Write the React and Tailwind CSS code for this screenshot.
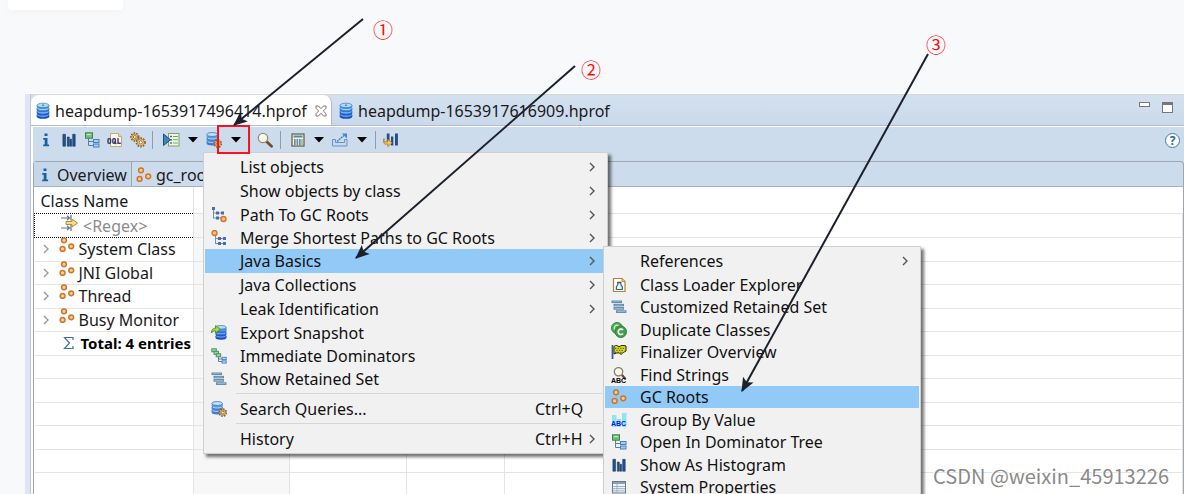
import React from "react";

const svg = { width: 16, height: 16, viewBox: "0 0 16 16", "aria-hidden": true };

function DbIcon() {
  return (
    <svg {...svg} height={18} viewBox="0 0 16 18">
      {[13, 9.8, 6.6, 3.4].map((y, i) => (
        <g key={y}>
          <path
            d={`M1.700 ${y}v1.400c0 1.400 2.800 2.300 6.300 2.300s6.300-.9 6.300-2.300V${y}z`}
            fill={["#1546c0", "#1c5ad0", "#2f78d8", "#4a94dc"][i]}
          />
          <ellipse cx="8" cy={y} rx="6" ry="2.200" fill={["#6aa4f4", "#86b8f6", "#a2cff6", "#b2deee"][i]} stroke="#2463bd" strokeWidth=".6" />
        </g>
      ))}
      <ellipse cx="8" cy="3.200" rx="1.300" ry=".7" fill="#3c7fc4" />
    </svg>
  );
}

function Gear({ x, y, r }) {
  return (
    <g>
      <circle cx={x} cy={y} r={r} fill="#ecd09a" stroke="#8e5f26" strokeWidth="1.8" strokeDasharray="1.6 1.1" />
      <circle cx={x} cy={y} r={r - 0.9} fill="#f3dba6" stroke="#a87838" strokeWidth=".8" />
      <circle cx={x} cy={y} r={r / 2.6} fill="#fff" stroke="#8c5c28" strokeWidth=".9" />
    </g>
  );
}

function DbGearIcon() {
  return (
    <svg {...svg}>
      {[9.600, 6, 2.500].map((y, i) => (
        <g key={y}>
          <path
            d={`M.6 ${y}v2c0 1.200 2.400 2 5.600 2s5.600-.8 5.600-2v-2z`}
            fill={["#3c78cc", "#4787d6", "#5b9ae0"][i]}
          />
          <ellipse cx="6.200" cy={y} rx="5.300" ry="2" fill={["#a4cbf4", "#add3f5", "#bfe0f6"][i]} stroke="#2c69b8" strokeWidth=".7" />
        </g>
      ))}
      <Gear x={11.8} y={11.6} r={3.500} />
    </svg>
  );
}

function ExportIcon() {
  return (
    <svg {...svg}>
      {[11, 7.800, 4.600, 2.300].map((y, i) => (
        <g key={y}>
          <path d={`M4.500 ${y}v1.800c0 1.200 2.400 2 5.500 2s5.500-.8 5.500-2v-1.800z`} fill={["#1546c0", "#1c5ad0", "#2f78d8", "#4a94dc"][i]} />
          <ellipse cx="10" cy={y} rx="5.200" ry="1.900" fill={["#6aa4f4", "#86b8f6", "#a2cff6", "#b2deee"][i]} stroke="#2463bd" strokeWidth=".6" />
        </g>
      ))}
      <path d="M.5 8C.5 4.300 2.500 3.200 4.600 3.100V.6l4.700 3.700-4.700 3.700V5.900C3 5.900 1.600 6.300.5 8z" fill="#a8d452" stroke="#4f8a1c" strokeWidth=".9" />
    </svg>
  );
}

function InfoIcon() {
  return (
    <svg {...svg}>
      <path d="M6.500 1.500h3v2.600h-3zM5.200 6h4.300v6.600h1.600v1.700H5.200v-1.700h1.500V7.700H5.200z" fill="#1464a5" />
    </svg>
  );
}

function BarsIcon() {
  return (
    <svg {...svg}>
      <g fill="#20518c" stroke="#173b68" strokeWidth=".6">
        <path d="M1.900 2.300h2.600v11.900H1.900zM6.300 5h2v9.200h-2zM9 7.200h1.600v7H9zM11.700 2.300h2.500v11.900h-2.500z" />
      </g>
    </svg>
  );
}

function TreeIcon() {
  return (
    <svg {...svg}>
      <path d="M4.500 6v7.500H10M4.500 9.500H10" fill="none" stroke="#5a7ea8" />
      <rect x="1.500" y=".8" width="7" height="5.400" fill="#78bf7c" stroke="#3a8450" />
      <path d="M3 2.500h4" stroke="#c8ecc4" />
      <rect x="9.500" y="7.500" width="5.500" height="3" fill="#a9cdf2" stroke="#4a80c0" />
      <rect x="9.500" y="12" width="5.500" height="3" fill="#a9cdf2" stroke="#4a80c0" />
    </svg>
  );
}

function OqlIcon() {
  return (
    <svg {...svg}>
      <path d="M3.500 1.500h8l3 3v10h-11z" fill="#fbf7e8" stroke="#c3ab72" />
      <path d="M11.500 1.500v3h3" fill="#ead9a4" stroke="#c3ab72" />
      <g fill="none" stroke="#40386e" strokeWidth="1.400">
        <rect x="1" y="6.700" width="2.600" height="4.600" rx="1" />
        <rect x="5.800" y="6.700" width="2.600" height="4.600" rx="1" />
        <path d="M7.300 9.500l2 2.500M11 6v5.300h2.800" />
      </g>
    </svg>
  );
}

function GearsIcon() {
  return (
    <svg {...svg}>
      <Gear x={4.8} y={5} r={3.8} />
      <Gear x={10.8} y={10.400} r={4.200} />
    </svg>
  );
}

function RunIcon() {
  return (
    <svg width="18" height="16" viewBox="0 0 18 16" aria-hidden>
      <rect x="6.500" y="1.500" width="10.500" height="12.500" fill="#eef6e4" stroke="#8c9c62" />
      <path d="M8 4.500h2M8 7.700h2M8 11h2" stroke="#3c8c50" strokeWidth="1.400" />
      <path d="M11 4.500h5M11 7.700h5M11 11h5" stroke="#6ba878" />
      <path d="M1.500 2v11.500l7-5.700z" fill="#3f84b8" stroke="#1d4f80" />
    </svg>
  );
}

function SearchIcon() {
  return (
    <svg {...svg}>
      <path d="M9.500 9.500l5 4.700" stroke="#7a4a28" strokeWidth="2.800" strokeLinecap="round" />
      <circle cx="6" cy="6" r="4.700" fill="#f7f5e4" stroke="#90907c" strokeWidth="1.300" />
      <path d="M3.600 5.500a2.700 2.700 0 0 1 2.600-2.200" fill="none" stroke="#fff" strokeWidth="1.400" />
    </svg>
  );
}

function CalcIcon() {
  return (
    <svg {...svg}>
      <rect x="2" y="2" width="12" height="12" fill="#f2f0dc" stroke="#6c6548" strokeWidth="1.300" />
      <path d="M3.500 4.500h9" stroke="#4f88b0" strokeWidth="2" />
      <path d="M4 8h8.500M4 10h8.500M4 12h8.500" stroke="#3b7290" strokeWidth="1.400" strokeDasharray="1.700 .8" />
    </svg>
  );
}

function ShareIcon() {
  return (
    <svg width="18" height="16" viewBox="0 0 18 16" aria-hidden>
      <path d="M1.500 7.500h3v3h9v-3h2.500v6.500H1.500z" fill="#c5daf0" stroke="#6a93c4" />
      <path d="M6 9.500l7-6" stroke="#3e7bb8" strokeWidth="1.300" strokeDasharray="2 .6" />
      <path d="M11 1.500h5v5z" fill="#4a85c0" />
    </svg>
  );
}

function CompareIcon() {
  return (
    <svg {...svg}>
      <path d="M3.800 1.500h2.700v8H3.800zM8 4.500h2.300v9H8zM12 1.500h2.900v12H12z" fill="#234f88" />
      <path d="M1 6.500v3.300h3.800V7.200l4.400 3.600-4.400 3.700v-2.400H2.500C1.300 12.100.6 11 .6 9.800z" fill="#f3c65a" stroke="#a87620" strokeWidth=".8" />
    </svg>
  );
}

function RootsIcon() {
  return (
    <svg {...svg}>
      <g fill="#fbcf8c" stroke="#d0742a" strokeWidth="1.500">
        <circle cx="5" cy="3.300" r="2.400" />
        <circle cx="3.600" cy="11.900" r="2.400" />
        <circle cx="12.200" cy="9.300" r="2.400" />
      </g>
    </svg>
  );
}

function PathIcon({ up }) {
  return (
    <svg {...svg}>
      <path d={up ? "M4.500 5v9M4.500 8.500H14M4.500 13.500H14" : "M2.500 1.500v10M2.500 6H13M2.500 11H10"} fill="none" stroke="#6f8fc0" />
      <g fill="#4a6ca8">
        {up ? (
          <path d="M7 7h3v3H7zM12 7h3v3h-3zM7 12h3v3H7zM12 12h3v3h-3z" />
        ) : (
          <path d="M1 0h3v3H1zM5 4.500h3v3H5zM10 4.500h3v3h-3zM5 9.500h3v3H5z" />
        )}
      </g>
      <circle cx={up ? 3.5 : 12.5} cy={up ? 3 : 12} r="2.500" fill="#f8c078" stroke="#cf7628" strokeWidth="1.400" />
    </svg>
  );
}

function DominatorsIcon() {
  return (
    <svg {...svg}>
      <path d="M7.500 9v4.500H11M7.500 11H11" fill="none" stroke="#5a7ea8" />
      <g fill="#9ed0a0" stroke="#3f8f5c" strokeWidth=".9">
        <rect x=".8" y=".8" width="4.500" height="3" />
        <rect x="3" y="3.300" width="4.500" height="3" />
        <rect x="5.200" y="5.800" width="4.500" height="3" />
      </g>
      <g fill="#b4d4f4" stroke="#4a80c0" strokeWidth=".9">
        <rect x="11" y="9.300" width="4.200" height="2.300" />
        <rect x="11" y="12.800" width="4.200" height="2.300" />
      </g>
    </svg>
  );
}

function SetIcon() {
  return (
    <svg {...svg}>
      <g fill="#a8cdea" stroke="#56809f" strokeWidth=".9">
        <rect x="1" y="2" width="9.500" height="1.600" />
        <rect x="3" y="5.300" width="9.500" height="1.600" />
        <rect x="3" y="8.600" width="9.500" height="1.600" />
        <rect x="5.500" y="11.800" width="9.500" height="1.600" />
      </g>
    </svg>
  );
}

function LoaderIcon() {
  return (
    <svg {...svg}>
      <path d="M2.500 1.500H11l3 3v10H2.500z" fill="#fffdf2" stroke="#a8863c" strokeWidth="1.200" />
      <path d="M11 1.500v3h3" fill="#e8cf8c" stroke="#b08a3c" />
      <path d="M6.800 5.500h3v2l1.500 2.300v2.700H5.400V9.800l1.400-2.300z" fill="#e8f3fc" stroke="#2c68a8" strokeWidth="1.200" />
      <path d="M6.500 5.500h3.600" stroke="#7a3a20" strokeWidth="1.500" />
    </svg>
  );
}

function DuplicateIcon() {
  return (
    <svg {...svg}>
      <circle cx="6" cy="6" r="5.500" fill="#58b05c" stroke="#2d8238" />
      <path d="M7.500 3.500a3 3 0 0 0-4 4" fill="none" stroke="#d4efd2" strokeWidth="1.200" />
      <circle cx="9.800" cy="9.800" r="5.700" fill="#3fa048" stroke="#2d8238" />
      <path d="M12 8.100a2.700 2.700 0 1 0 0 3.500" fill="none" stroke="#fff" strokeWidth="1.600" />
    </svg>
  );
}

function FlagIcon() {
  return (
    <svg {...svg}>
      <path d="M1.500 1v14" stroke="#3a5c90" strokeWidth="1.800" />
      <path d="M3 2.500c2-1.800 3.500-1 5 .3 1.800-1.300 4-1.800 7-.8v5c-2 1.200-3.400 1.800-5 3.500-1.500-1.800-3-2.300-7-.5z" fill="#d9dc1c" stroke="#22240c" />
      <path d="M4 4.300h10M4 8.300h8" stroke="#4c4c10" strokeDasharray="1.300 1.300" />
      <path d="M5.300 6.300h8" stroke="#4c4c10" strokeDasharray="1.300 1.300" />
    </svg>
  );
}

function StringsIcon() {
  return (
    <svg {...svg}>
      <circle cx="7.500" cy="4.800" r="4.200" fill="#fbfae8" stroke="#80806c" strokeWidth="1.300" />
      <path d="M11 8l3.500 4" stroke="#6b3a2c" strokeWidth="2" />
      <text x="0" y="15.500" fontSize="7" fontWeight="700" fontFamily="Liberation Sans, sans-serif" fill="#000">ABC</text>
    </svg>
  );
}

function GroupIcon() {
  return (
    <svg {...svg}>
      <path d="M1 3h4.500v12H1zM6 7h4v8H6zM11 1h4.500v14H11z" fill="#90e6ee" />
      <text x="0" y="13.500" fontSize="7" fontWeight="700" fontFamily="Liberation Sans, sans-serif" fill="#0a18e0">ABC</text>
    </svg>
  );
}

function PropertiesIcon() {
  return (
    <svg {...svg}>
      <rect x="1.500" y="2.500" width="13" height="11.500" fill="#eef3f8" stroke="#6c7c90" />
      <path d="M2 4h12" stroke="#8ba0b8" strokeWidth="2" />
      <path d="M2 7.500h12M2 9.700h12M2 11.900h12M6 5v9" stroke="#9aaabd" strokeWidth=".9" />
    </svg>
  );
}

function RegexIcon() {
  return (
    <svg width="18" height="16" viewBox="0 0 18 16" aria-hidden>
      <path d="M0 3h8M0 13h8M6 .8l2.500 2.200L6 5M6 10.800L8.500 13 6 15M10 0v5.500M10 10v6" fill="none" stroke="#5f7488" strokeWidth="1.200" />
      <path d="M5 6.500h6V4l5.500 4-5.500 4V9.500H5z" fill="#f7dc90" stroke="#bb8c2c" />
    </svg>
  );
}

function Caret() {
  return (
    <svg width="10" height="6" viewBox="0 0 10 6" aria-hidden>
      <path d="M0 0h10L5 5.500z" fill="#000" />
    </svg>
  );
}

function Chevron({ color = "#555" }) {
  return (
    <svg width="6" height="10" viewBox="0 0 6 10" aria-hidden>
      <path d="M1 1l4 4-4 4" fill="none" stroke={color} strokeWidth="1.400" />
    </svg>
  );
}

function ToolButton({ label, className = "w-[23px]", children }) {
  return (
    <button type="button" aria-label={label} className={`flex h-6 shrink-0 items-center justify-center ${className}`}>
      {children}
    </button>
  );
}

const Divider = () => <span className="mx-[3px] h-[18px] w-px shrink-0 bg-[#8f9bab]" />;

function MenuItem({ item, sub }) {
  const { label, icon, shortcut, arrow, active } = item;
  let height = icon ? "h-[23px]" : "h-6";
  if (sub && icon) height = "odd:h-[22px] even:h-[23px]";
  return (
    <li className={`${height} ${active ? "bg-[#91c9f7]" : ""}`}>
      <button type="button" role="menuitem" className="flex h-full w-full items-center text-left whitespace-nowrap">
        <span className="flex w-7 shrink-0 justify-center">{icon}</span>
        <span className="flex-1 pl-[7px]">{label}</span>
        {shortcut && <span className="w-[50px]">{shortcut}</span>}
        <span className="mr-[7px] flex w-[14px] justify-center">{arrow && <Chevron />}</span>
      </button>
    </li>
  );
}

const mainMenu = [
  { label: "List objects", arrow: true },
  { label: "Show objects by class", arrow: true },
  { label: "Path To GC Roots", icon: <PathIcon />, arrow: true },
  { label: "Merge Shortest Paths to GC Roots", icon: <PathIcon up />, arrow: true },
  { label: "Java Basics", arrow: true, active: true },
  { label: "Java Collections", arrow: true },
  { label: "Leak Identification", arrow: true },
  { label: "Export Snapshot", icon: <ExportIcon /> },
  { label: "Immediate Dominators", icon: <DominatorsIcon /> },
  { label: "Show Retained Set", icon: <SetIcon /> },
  null,
  { label: "Search Queries...", icon: <DbGearIcon />, shortcut: "Ctrl+Q" },
  null,
  { label: "History", shortcut: "Ctrl+H", arrow: true },
];

const basicsMenu = [
  { label: "References", arrow: true },
  { label: "Class Loader Explorer", icon: <LoaderIcon /> },
  { label: "Customized Retained Set", icon: <SetIcon /> },
  { label: "Duplicate Classes", icon: <DuplicateIcon /> },
  { label: "Finalizer Overview", icon: <FlagIcon /> },
  { label: "Find Strings", icon: <StringsIcon /> },
  { label: "GC Roots", icon: <RootsIcon />, active: true },
  { label: "Group By Value", icon: <GroupIcon /> },
  { label: "Open In Dominator Tree", icon: <TreeIcon /> },
  { label: "Show As Histogram", icon: <BarsIcon /> },
  { label: "System Properties", icon: <PropertiesIcon /> },
];

function Menu({ items, sub, className }) {
  return (
    <ul
      role="menu"
      className={`absolute border border-[#cfcfcf] bg-[#f1f1f1] px-px text-[#111] shadow-[3px_3px_3px_rgba(0,0,0,0.55)] ${className}`}
    >
      {items.map((item, i) =>
        item ? (
          <MenuItem key={item.label} item={item} sub={sub} />
        ) : (
          <li key={i} role="separator" className="mr-1 ml-[31px] flex h-[7px] items-center">
            <span className="h-px w-full bg-[#d7d7d7]" />
          </li>
        )
      )}
    </ul>
  );
}

const rows = ["System Class", "JNI Global", "Thread", "Busy Monitor"];

function EmptyCells() {
  return (
    <>
      <td className="border border-[#e4e4e4] bg-[#f7f7f7]" />
      <td className="border border-[#e4e4e4]" />
      <td className="border border-[#e4e4e4]" />
      <td className="border border-[#e4e4e4]" />
    </>
  );
}

function RootsTable() {
  return (
    <table className="w-full table-fixed border-collapse bg-white">
      <colgroup>
        <col className="w-[159px]" />
        <col className="w-[96px]" />
        <col className="w-[117px]" />
        <col className="w-[98px]" />
        <col />
      </colgroup>
      <thead>
        <tr className="h-[26px]">
          <th className="border-r border-[#e4e4e4] pt-[2px] pl-[6px] text-left font-normal">Class Name</th>
          <th colSpan={4} />
        </tr>
      </thead>
      <tbody>
        <tr className="h-6">
          <td className="border border-dotted border-black p-0">
            <div className="flex h-[22px] items-center">
              <span className="mr-1 ml-[26px] shrink-0 pb-1">
                <RegexIcon />
              </span>
              <input aria-label="Class name filter" placeholder="<Regex>" className="w-24 min-w-0 pt-[2px] leading-5 outline-none placeholder:text-[#8c8c8c]" />
            </div>
          </td>
          <EmptyCells />
        </tr>
        {rows.map((name) => (
          <tr key={name} className="odd:h-[23px] even:h-6">
            <td className="border-b border-[#e4e4e4] p-0">
              <div className="flex h-[22px] items-center">
                <button type="button" aria-label={`Expand ${name}`} className="ml-[7px] flex w-2 shrink-0 justify-center">
                  <Chevron color="#999" />
                </button>
                <span className="mr-1 ml-[9px] shrink-0 pb-2">
                  <RootsIcon />
                </span>
                <span className="whitespace-nowrap">{name}</span>
              </div>
            </td>
            <EmptyCells />
          </tr>
        ))}
        <tr className="odd:h-[23px] even:h-6">
          <td className="border-b border-[#e4e4e4] p-0">
            <div className="flex h-[22px] items-center">
              <svg width="12" height="14" viewBox="0 0 12 14" aria-hidden className="mr-[6px] ml-7 shrink-0">
                <path d="M10 4V1.500H1.500L6.500 7l-5 5.500H10V10" fill="none" stroke="#3f6f9f" strokeWidth="1.200" />
              </svg>
              <b className="text-[15px] whitespace-nowrap text-black">Total: 4 entries</b>
            </div>
          </td>
          <EmptyCells />
        </tr>
        {[1, 2, 3, 4, 5, 6, 7].map((n) => (
          <tr key={n} className="odd:h-[23px] even:h-6">
            <td className="border-b border-[#e4e4e4]" />
            <EmptyCells />
          </tr>
        ))}
      </tbody>
    </table>
  );
}

function Arrow({ x1, y1, x2, y2 }) {
  const angle = (Math.atan2(y2 - y1, x2 - x1) * 180) / Math.PI;
  return (
    <g stroke="#1c202b" fill="#1c202b">
      <line x1={x1} y1={y1} x2={x2} y2={y2} strokeWidth="2" />
      <path d="M1 0L-13 -6L-10 0L-13 6z" stroke="none" transform={`translate(${x2} ${y2}) rotate(${angle})`} />
    </g>
  );
}

function Annotations() {
  return (
    <>
      <div className="pointer-events-none absolute top-[125px] left-[217px] h-[29px] w-[33px] border-2 border-[#f5141c]" />
      <svg width="1184" height="494" className="pointer-events-none absolute top-0 left-0" aria-hidden>
        <Arrow x1={363} y1={19} x2={234} y2={125} />
        <Arrow x1={575} y1={66} x2={356} y2={258} />
        <Arrow x1={928} y1={54} x2={742} y2={391} />
      </svg>
      <div className="font-['Noto_Sans_CJK_SC',sans-serif] text-xl leading-5 text-[#fb0d0d]">
        <span className="absolute top-5 left-[373px]">①</span>
        <span className="absolute top-[60px] left-[581px]">②</span>
        <span className="absolute top-[35px] left-[926px]">③</span>
      </div>
    </>
  );
}

export default function App() {
  return (
    <div className="relative h-screen overflow-hidden bg-[#f8f9fb] font-['Noto_Sans',sans-serif] text-base leading-5 text-[#1a1a1a]">
      <div className="ml-2 h-[10px] w-[115px] rounded-b bg-white shadow-[0_2px_8px_rgba(0,0,0,0.03)]" />

      <main className="mt-[83px] ml-[25px] border-t border-white bg-[#dfe4f6] pl-[5px]">
        <div className="border-l border-[#c4c6d6] bg-white">
          <header className="flex h-8 items-stretch border-t border-b border-t-[#d6d6d6] border-b-[#b4b8d6] bg-linear-to-b from-[#d3e1ef] to-[#cad9eb]">
            <button type="button" className="flex w-[301px] items-center rounded-t-lg border-r border-[#b4b8d6] bg-white pt-[2px] pl-1">
              <DbIcon />
              <span className="ml-1">heapdump-1653917496414.hprof</span>
              <svg width="12" height="12" viewBox="0 0 12 12" className="ml-2" aria-hidden>
                <path d="M1 1h2.500L6 3.700 8.500 1H11v2.300L8.300 6 11 8.700V11H8.500L6 8.300 3.500 11H1V8.700L3.700 6 1 3.300z" fill="#fff" stroke="#777" />
              </svg>
            </button>
            <button type="button" className="flex items-center pt-[2px] pl-[6px]">
              <DbIcon />
              <span className="ml-1">heapdump-1653917616909.hprof</span>
            </button>
            <div className="mt-[7px] mr-[11px] ml-auto flex items-start gap-3">
              <button type="button" aria-label="Minimize" className="h-[5px] w-[11px] border border-[#777] bg-white" />
              <button type="button" aria-label="Maximize" className="h-[11px] w-[11px] border border-t-[3px] border-[#777] bg-white" />
            </div>
          </header>

          <div className="mt-px ml-[2px] bg-[#ccdcec]">
            <div className="flex h-[34px] items-start pt-px pl-px">
              <ToolButton label="Overview"><InfoIcon /></ToolButton>
              <ToolButton label="Histogram"><BarsIcon /></ToolButton>
              <ToolButton label="Dominator tree"><TreeIcon /></ToolButton>
              <ToolButton label="OQL"><OqlIcon /></ToolButton>
              <ToolButton label="Thread overview"><GearsIcon /></ToolButton>
              <div className="flex h-6 items-center"><Divider /></div>
              <ToolButton label="Run report" className="w-[30px]"><RunIcon /></ToolButton>
              <ToolButton label="Report list" className="w-[13px]"><Caret /></ToolButton>
              <ToolButton label="Query browser" className="w-[30px]"><DbGearIcon /></ToolButton>
              <ToolButton label="Query list" className="w-[13px]"><Caret /></ToolButton>
              <div className="ml-1 flex h-6 items-center"><Divider /></div>
              <ToolButton label="Find" className="w-6"><SearchIcon /></ToolButton>
              <div className="flex h-6 items-center"><Divider /></div>
              <ToolButton label="Group result" className="w-7"><CalcIcon /></ToolButton>
              <ToolButton label="Group list" className="w-[13px]"><Caret /></ToolButton>
              <ToolButton label="Export" className="w-[30px]"><ShareIcon /></ToolButton>
              <ToolButton label="Export list" className="w-[13px]"><Caret /></ToolButton>
              <div className="ml-1 flex h-6 items-center"><Divider /></div>
              <ToolButton label="Compare" className="w-6"><CompareIcon /></ToolButton>
              <button
                type="button"
                aria-label="Help"
                className="mt-[5px] mr-1 ml-auto flex h-[15px] w-[15px] items-center justify-center rounded-full border border-[#3f7cae] bg-white text-xs font-bold text-[#2a6a9e]"
              >
                ?
              </button>
            </div>

            <div className="rounded-t border border-b-0 border-[#a0a6ad]">
              <div className="flex h-[25px] border-b border-[#a7b0bb]">
                <button type="button" className="flex w-[98px] shrink-0 items-center border-r border-[#a0a6ad] bg-[#c7d7ea] pt-[2px] pl-[3px]">
                  <InfoIcon />
                  <span className="ml-1">Overview</span>
                </button>
                <button type="button" className="flex items-center pt-[2px] pl-1">
                  <RootsIcon />
                  <span className="ml-1">gc_roots</span>
                </button>
              </div>
              <RootsTable />
            </div>
          </div>
        </div>
      </main>

      <Menu items={mainMenu} className="top-[152px] left-[203px] w-[405px] py-[2px]" />
      <Menu items={basicsMenu} sub className="top-[246px] left-[603px] w-[318px] py-[2px]" />
      <Annotations />
      <p className="absolute right-[15px] bottom-2 font-['Noto_Sans_CJK_SC',sans-serif] text-xl leading-5 font-normal text-[#8a8a8a] [text-shadow:-1px_-1px_0_#fff]">
        CSDN @weixin_45913226
      </p>
    </div>
  );
}
